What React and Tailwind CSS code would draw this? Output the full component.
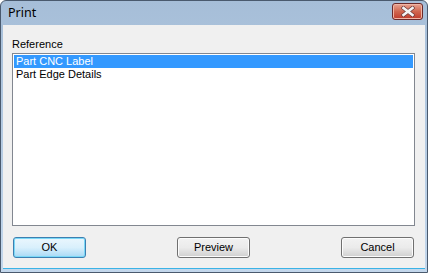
import React from 'react';

const items = ['Part CNC Label', 'Part Edge Details'];

const Button = ({ children, focused }) => (
  <button
    className={
      focused
        ? 'w-[73px] h-[21px] rounded-[3px] border border-[#3c7fb1] bg-gradient-to-b from-[#eaf6fd] via-[#d9f0fc] to-[#a7d9f5] text-[11px] text-black shadow-[inset_0_0_0_1px_#7ad8f7]'
        : 'w-[73px] h-[21px] rounded-[3px] border border-[#707070] bg-gradient-to-b from-[#f2f2f2] via-[#ebebeb] to-[#cfcfcf] text-[11px] text-black shadow-[inset_0_0_0_1px_#fcfcfc]'
    }
    style={{ fontFamily: '"Liberation Sans", Arial, sans-serif' }}
  >
    {children}
  </button>
);

const App = () => (
  <div className="w-[428px] h-[273px] flex flex-col rounded-t-[6px] border border-[#4a5a6e] bg-gradient-to-b from-[#a6bed8] to-[#c3d7ec] overflow-hidden">
    <div className="h-[24px] flex items-center justify-between pl-[7px] pr-[4px] shrink-0">
      <span className="text-[12.5px] text-black" style={{ fontFamily: '"Noto Sans", "Open Sans", sans-serif' }}>Print</span>
      <div className="w-[31px] h-[17px] mt-[-3px] rounded-[3px] border border-[#6b2a2a] bg-gradient-to-b from-[#e8a493] via-[#d0664f] to-[#c0392b] flex items-center justify-center shadow-[inset_0_0_0_1px_#f0b5a5]">
        <svg width="14" height="11" viewBox="0 0 14 11">
          <path d="M2.5 2 L11.5 9 M11.5 2 L2.5 9" stroke="#6a3a3a" strokeWidth="4" strokeLinecap="square" />
          <path d="M2.5 2 L11.5 9 M11.5 2 L2.5 9" stroke="#f4f4f4" strokeWidth="2.6" strokeLinecap="square" />
        </svg>
      </div>
    </div>
    <div
      className="flex-1 mx-[2px] mb-[3px] bg-[#f0f0f0] border-b border-[#3ab3e6] flex flex-col pl-[9px] pr-[10px] pt-[13px] pb-[10px] text-[11px] text-black"
      style={{ fontFamily: '"Liberation Sans", Arial, sans-serif' }}
    >
      <div className="h-[15px] leading-[13px]">Reference</div>
      <div className="h-[173px] border border-[#828790] bg-white p-[1px]">
        {items.map((item, i) => (
          <div
            key={item}
            className={
              i === 0
                ? 'h-[13px] leading-[13px] pl-[2px] bg-[#3399ff] text-white'
                : 'h-[13px] leading-[13px] pl-[2px]'
            }
          >
            {item}
          </div>
        ))}
      </div>
      <div className="flex justify-between mt-[11px] pl-[1px] pr-[1px]">
        <Button focused>OK</Button>
        <Button>Preview</Button>
        <Button>Cancel</Button>
      </div>
    </div>
  </div>
);

export default App;
